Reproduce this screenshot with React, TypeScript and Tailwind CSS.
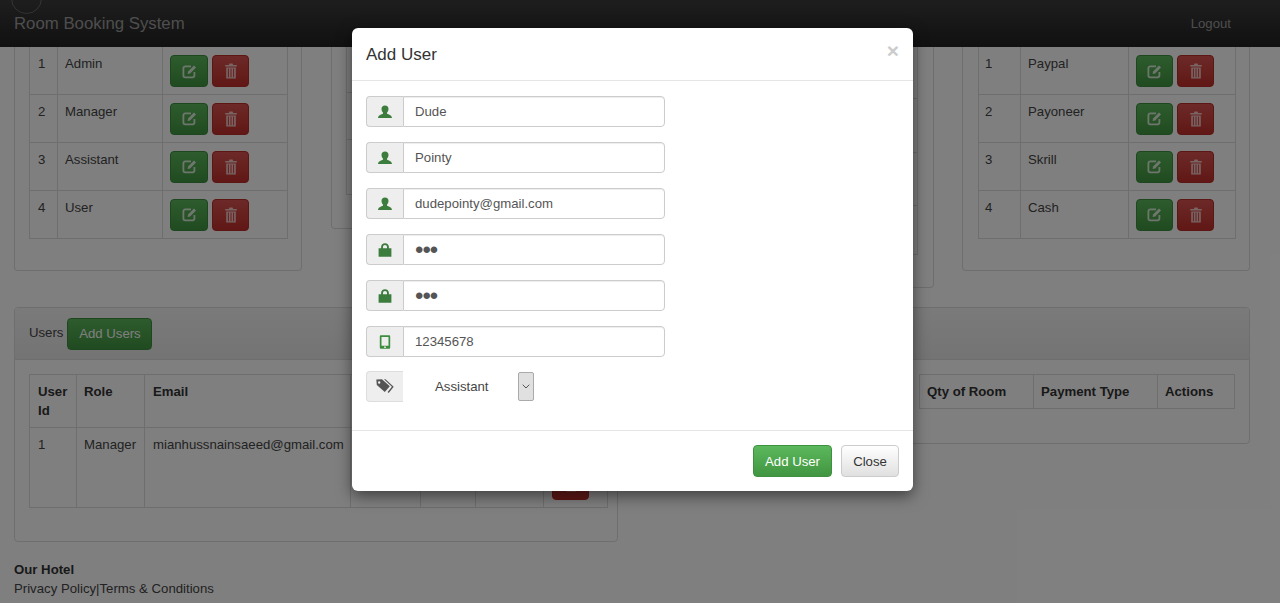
import React from "react";

const Edit = () => (
  <svg width="15" height="15" viewBox="0 0 15 15" fill="none" className="block">
    <path d="M9 2.400H3.300A1.900 1.900 0 0 0 1.400 4.300v7.200a1.900 1.900 0 0 0 1.900 1.900h7.200a1.900 1.900 0 0 0 1.900-1.900V8" stroke="currentColor" strokeWidth="1.800" />
    <path d="M5.600 10l.5-2.600L12 1.500l2 2-5.900 5.900z" fill="currentColor" />
  </svg>
);
const Trash = () => (
  <svg width="12" height="16" viewBox="0 0 12 16" className="block">
    <path d="M4.400.5h3.200l.5 1.400H11.800v1.500H.2V1.900h3.700z" fill="currentColor" />
    <path d="M1.200 4.400h9.600v11.100H1.200zM2.900 5.600v8.700h1V5.600zm2.600 0v8.700h1V5.600zm2.600 0v8.700h1V5.600z" fill="currentColor" fillRule="evenodd" />
  </svg>
);
const UserIcon = () => (
  <svg width="14" height="14" viewBox="0 0 14 14" className="block text-[#3c7d3d]">
    <path d="M7 .5c2.300 0 3.500 1.500 3.500 3.500 0 1.500-.7 2.900-1.500 3.600v1c0 .6 4.700 1 5 4.400H0c.3-3.400 5-3.800 5-4.400v-1C4.200 6.900 3.500 5.500 3.500 4 3.500 2 4.700.5 7 .5z" fill="currentColor" />
  </svg>
);
const LockIcon = () => (
  <svg width="14" height="14" viewBox="0 0 14 14" className="block text-[#3c7d3d]">
    <path d="M.6 5.200h2.500V4C3.100 1.700 4.700.3 7 .3s3.900 1.400 3.900 3.700v1.200h2.500v8.500H.6zM5 5.200h4V4C9 2.800 8.200 2 7 2s-2 .8-2 2z" fill="currentColor" fillRule="evenodd" />
  </svg>
);
const PhoneIcon = () => (
  <svg width="12" height="14" viewBox="0 0 12 14" className="block text-[#3c8d3d]">
    <path d="M2.200.2h7.600c.9 0 1.400.5 1.400 1.400v10.800c0 .9-.5 1.400-1.400 1.400H2.200c-.9 0-1.400-.5-1.400-1.400V1.600C.8.700 1.300.2 2.200.2zm.3 1.700v8.800h7V1.900zM6 11.300a.9.9 0 1 0 0 1.800.9.9 0 0 0 0-1.800z" fill="currentColor" fillRule="evenodd" />
  </svg>
);
const TagsIcon = () => (
  <svg width="18" height="15" viewBox="0 0 18 15" className="block text-[#555]">
    <path d="M.3.500 6 .3l7.800 7-5 5.700L.8 6zM3.200 2.300a1.200 1.200 0 1 0 0 2.400 1.200 1.200 0 0 0 0-2.400z" fill="currentColor" fillRule="evenodd" />
    <path d="M8 .3h1.500l8.200 7.400-5 6.300-1.100-1 4.300-5.300z" fill="currentColor" />
  </svg>
);

const GreenBtn = ({ narrow }: { narrow?: boolean }) => (
  <span className={(narrow ? "w-[37px]" : "w-[38px]") + " inline-flex items-center justify-center h-[32px] rounded-[4px] border border-[#3e8f3e] bg-gradient-to-b from-[#5cb85c] to-[#419641] text-white/80"}>
    <Edit />
  </span>
);
const RedBtn = () => (
  <span className="inline-flex items-center justify-center w-[37px] h-[32px] rounded-[4px] border border-[#b92c28] bg-gradient-to-b from-[#d9534f] to-[#c12e2a] text-white/70">
    <Trash />
  </span>
);

const cell = "border border-[#ddd] align-top px-2 py-[7px]";

function SmallTable({ rows, w, narrow }: { rows: string[]; w: [string, string, string]; narrow?: boolean }) {
  return (
    <table className="table-fixed border-collapse w-full">
      <colgroup>
        <col className={w[0]} />
        <col className={w[1]} />
        <col className={w[2]} />
      </colgroup>
      <tbody>
        {rows.map((r, i) => (
          <tr key={r} className={i === 0 ? "h-[47px]" : "h-[48px]"}>
            <td className={cell + (narrow ? " pl-[6px]" : "") + (i === 0 ? " border-t-0" : "")}>{i + 1}</td>
            <td className={cell + " pl-[7px]" + (i === 0 ? " border-t-0" : "")}>{r}</td>
            <td className={cell + " pl-[7px] pr-0" + (i === 0 ? " border-t-0" : "")}>
              <div className="flex gap-[4px] h-[32px] pt-px">
                <GreenBtn narrow={narrow} />
                <RedBtn />
              </div>
            </td>
          </tr>
        ))}
      </tbody>
    </table>
  );
}

function Field({ icon, value, type = "text" }: { icon: React.ReactNode; value: string; type?: string }) {
  return (
    <div className="flex w-[299px] h-[31px] mb-[15px]">
      <span className="flex items-center justify-center w-[37px] shrink-0 bg-[#eee] border border-r-0 border-[#ccc] rounded-l-[4px]">
        {icon}
      </span>
      <input
        readOnly
        type={type}
        value={value}
        className={
          "flex-1 min-w-0 border border-[#ccc] rounded-r-[4px] px-[11px] text-[#555] outline-none shadow-[inset_0_1px_1px_rgba(0,0,0,0.075)] " +
          (type === "password" ? "text-[24px] tracking-[-1px]" : "text-[13.2px]")
        }
      />
    </div>
  );
}

export default function App() {
  return (
    <div className="relative h-[603px] w-[1280px] overflow-hidden bg-white text-[13.2px] leading-[19px] text-[#444] font-['Liberation_Sans',Arial,sans-serif]">
      <nav className="flex items-center justify-between h-[47px] pl-[14px] pr-[49px] bg-gradient-to-b from-[#3c3c3c] to-[#222]">
        <span className="text-[16.8px] text-[#9d9d9d]">Room Booking System</span>
        <span className="text-[#9d9d9d]">Logout</span>
      </nav>

      <div className="pl-[14px] pr-[30px]">
        <div className="flex items-start h-[241px]">
          <section className="w-[288px] h-[224px] border border-t-0 border-[#ddd] rounded-b-[4px] pl-[14px] pr-[15px]">
            <SmallTable rows={["Admin", "Manager", "Assistant", "User"]} w={["w-[28px]", "w-[105px]", "w-[125px]"]} />
          </section>
          <section className="ml-[29px] w-[300px] h-[182px] border border-t-0 border-[#ddd] rounded-b-[4px] pl-[14px] pr-[15px]">
            <div className="h-[148px] border border-t-0 border-[#ddd]">
              <div className="h-[46px] border-b border-[#ddd]" />
              <div className="h-[47px] border-b border-[#ddd]" />
            </div>
          </section>
          <section className="ml-[10px] flex-1 h-[241px] border border-t-0 border-[#ddd] rounded-b-[4px] px-[15px]">
            <div className="h-[208px] border border-t-0 border-[#ddd]">
              <div className="h-[52px] border-b border-[#ddd]" />
              <div className="h-[54px] border-b border-[#ddd]" />
              <div className="h-[53px] border-b border-[#ddd]" />
            </div>
          </section>
          <section className="ml-[28px] w-[288px] h-[224px] border border-t-0 border-[#ddd] rounded-b-[4px] px-[15px]">
            <SmallTable narrow rows={["Paypal", "Payoneer", "Skrill", "Cash"]} w={["w-[42px]", "w-[108px]", "w-[107px]"]} />
          </section>
        </div>

        <div className="flex items-start gap-[12px] mt-[19px]">
          <section className="w-[604px] h-[235px] border border-[#ddd] rounded-[4px] overflow-hidden">
            <header className="flex items-center gap-[4px] h-[52px] px-[14px] bg-gradient-to-b from-[#f5f5f5] to-[#e8e8e8] border-b border-[#ddd]">
              <span className="-mt-[3px]">Users</span>
              <span className="flex items-center justify-center w-[85px] h-[32px] rounded-[4px] border border-[#3e8f3e] bg-gradient-to-b from-[#5cb85c] to-[#419641] text-white">
                Add Users
              </span>
            </header>
            <div className="pl-[14px] pt-[14px]">
              <table className="table-fixed border-collapse w-[578px]">
                <colgroup>
                  <col className="w-[47px]" />
                  <col className="w-[68px]" />
                  <col className="w-[206px]" />
                  <col className="w-[70px]" />
                  <col className="w-[55px]" />
                  <col className="w-[68px]" />
                  <col className="w-[64px]" />
                </colgroup>
                <thead>
                  <tr className="h-[53px] font-bold text-left text-[#333]">
                    <th className={cell}>User Id</th>
                    <th className={cell + " pl-[7px]"}>Role</th>
                    <th className={cell}>Email</th>
                    <th className={cell} />
                    <th className={cell} />
                    <th className={cell} />
                    <th className={cell} />
                  </tr>
                </thead>
                <tbody>
                  <tr className="h-[80px]">
                    <td className={cell}>1</td>
                    <td className={cell + " pl-[7px]"}>Manager</td>
                    <td className={cell + " whitespace-nowrap"}>mianhussnainsaeed@gmail.com</td>
                    <td className={cell} />
                    <td className={cell} />
                    <td className={cell} />
                    <td className={cell + " pt-0"}>
                      <div className="flex flex-col gap-px pt-[7px]">
                        <GreenBtn />
                        <RedBtn />
                      </div>
                    </td>
                  </tr>
                </tbody>
              </table>
            </div>
          </section>

          <section className="flex-1 h-[137px] border border-[#ddd] rounded-[4px] overflow-hidden">
            <header className="h-[52px] bg-gradient-to-b from-[#f5f5f5] to-[#e8e8e8] border-b border-[#ddd]" />
            <div className="pt-[14px] pl-[288px] pr-[14px]">
              <div className="flex h-[35px] items-center font-bold text-[#333] border border-[#ddd]">
                <span className="w-[113px] pl-[7px]">Qty of Room</span>
                <span className="w-[125px] h-full flex items-center pl-[7px] border-l border-r border-[#ddd]">Payment Type</span>
                <span className="pl-[7px]">Actions</span>
              </div>
            </div>
          </section>
        </div>

        <footer className="mt-[18px]">
          <div className="font-bold text-[#333]">Our Hotel</div>
          <div>Privacy Policy|Terms &amp; Conditions</div>
        </footer>
      </div>

      {/* modal backdrop */}
      <div className="absolute inset-0 bg-black/50 flex justify-center items-start pt-[28px] pr-[15px]">
        <div className="w-[561px] h-[463px] flex flex-col bg-white rounded-[6px] shadow-[0_5px_15px_rgba(0,0,0,0.5)] text-[#333]">
          <div className="flex items-center justify-between h-[53px] pt-px pl-[14px] pr-[14px] border-b border-[#e5e5e5]">
            <h4 className="text-[17px] leading-[20px]">Add User</h4>
            <span className="text-[21px] font-bold leading-none text-[#ccc] -mt-[9px]">×</span>
          </div>
          <div className="flex-1 pl-[14px] pt-[15px]">
            <Field icon={<UserIcon />} value="Dude" />
            <Field icon={<UserIcon />} value="Pointy" />
            <Field icon={<UserIcon />} value="dudepointy@gmail.com" />
            <Field icon={<LockIcon />} type="password" value="123" />
            <Field icon={<LockIcon />} type="password" value="123" />
            <Field icon={<PhoneIcon />} value="12345678" />
            <div className="flex items-center h-[31px] -mt-[1px]">
              <span className="flex items-center justify-center w-[37px] h-full bg-[#eee] border border-r-0 border-[#ddd] rounded-l-[4px]">
                <TagsIcon />
              </span>
              <span className="w-[115px] pl-[32px] text-[#444]">Assistant</span>
              <span className="flex items-center justify-center w-[16px] h-[29px] border border-[#aaa] rounded-[2px] bg-[#e0e0e0] text-[#555]">
                <svg width="8" height="5" viewBox="0 0 8 5" fill="none">
                  <path d="M.7.7 4 4l3.300-3.300" stroke="currentColor" strokeWidth="1" />
                </svg>
              </span>
            </div>
          </div>
          <div className="flex justify-end gap-[9px] h-[61px] pt-[14px] pr-[14px] border-t border-[#e5e5e5]">
            <span className="flex items-center justify-center w-[79px] h-[32px] rounded-[4px] border border-[#3e8f3e] bg-gradient-to-b from-[#5cb85c] to-[#419641] text-white">
              Add User
            </span>
            <span className="flex items-center justify-center w-[58px] h-[32px] rounded-[4px] border border-[#ccc] bg-gradient-to-b from-white to-[#e0e0e0] text-[#333]">
              Close
            </span>
          </div>
        </div>
      </div>

      {/* faint circle at the very top-left of the picture */}
      <div className="absolute left-[11px] -top-[17px] w-[31px] h-[31px] rounded-full border border-white/10" />
    </div>
  );
}
